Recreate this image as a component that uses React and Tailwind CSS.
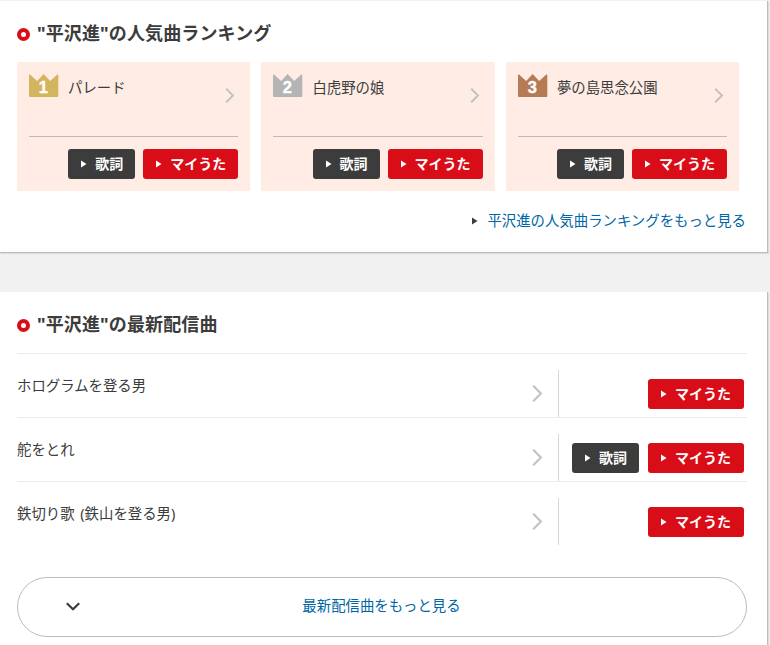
const ranking = [
  { rank: 1, title: 'パレード', color: '#d4b55f' },
  { rank: 2, title: '白虎野の娘', color: '#b4b4b4' },
  { rank: 3, title: '夢の島思念公園', color: '#b67b54' },
];

const latest = [
  { title: 'ホログラムを登る男', lyrics: false },
  { title: '舵をとれ', lyrics: true },
  { title: '鉄切り歌 (鉄山を登る男)', lyrics: false },
];

function Heading({ children }) {
  return (
    <h2 className="flex h-[26px] items-center text-[18px] leading-[26px] font-bold tracking-[0.12px]">
      <span className="mt-[3px] mr-[7px] h-[13px] w-[13px] shrink-0 rounded-full border-4 border-[#d90d17] bg-white" />
      {children}
    </h2>
  );
}

function Crown({ rank, color }) {
  return (
    <svg width="30" height="24" viewBox="0 0 30 24" className="mt-px shrink-0">
      <path
        d="M0.7 0.3 L8.2 7 L14.6 0 L21.2 7 L28.6 0.3 L29.3 1 V22 Q29.3 23 28.3 23 H1 Q0 23 0 22 V1 Z"
        fill={color}
      />
      <text
        x="14.3"
        y="19"
        textAnchor="middle"
        fill="#fff"
        stroke="#fff"
        strokeWidth="0.4"
        fontSize="16.5"
        fontWeight="700"
        fontFamily="Liberation Sans, sans-serif"
      >
        {rank}
      </text>
    </svg>
  );
}

function Triangle({ className }) {
  return (
    <svg width="6" height="8" viewBox="0 0 6 8" className={className}>
      <path d="M0 0.5 L5.5 4 L0 7.5 Z" fill="currentColor" />
    </svg>
  );
}

function Chevron({ width, height, className }) {
  return (
    <svg width={width} height={height} viewBox="0 0 10 16" className={className}>
      <path d="M1 0.8 L8.2 8 L1 15.2" fill="none" stroke="#c1c1c1" strokeWidth="2" />
    </svg>
  );
}

function LyricsButton() {
  return (
    <button className="flex h-[30px] w-[67px] items-center rounded-[3px] bg-[#3c3c3c] pl-[13px] text-[14px] leading-[30px] font-bold whitespace-nowrap text-white">
      <Triangle className="mr-2 shrink-0" />
      歌詞
    </button>
  );
}

function MyUtaButton({ className }) {
  return (
    <button
      className={`flex h-[30px] items-center rounded-[3px] bg-[#d90d17] pl-[13px] text-[14px] leading-[30px] font-bold whitespace-nowrap text-white ${className}`}
    >
      <Triangle className="mr-2 shrink-0" />
      マイうた
    </button>
  );
}

function RankingCard({ rank, title, color }) {
  return (
    <div className="flex h-[129px] flex-1 flex-col bg-[#ffece5] px-3 pb-3">
      <div className="flex h-[75px] items-start border-b border-[#bbb] pt-[11px]">
        <Crown rank={rank} color={color} />
        <p className="ml-[9px] flex-1 pt-[4px] text-[14.4px] leading-[22px]">{title}</p>
        <Chevron width="10" height="15" className="mt-[15px] mr-[3px]" />
      </div>
      <div className="mt-3 flex justify-end gap-2">
        <LyricsButton />
        <MyUtaButton className="w-[95px]" />
      </div>
    </div>
  );
}

function SongRow({ title, lyrics }) {
  return (
    <li className="flex h-16 border-t border-[#ebebeb] pt-4">
      <p className="flex-1 pt-[5px] text-[14.4px] leading-[22px] [word-spacing:2px]">{title}</p>
      <Chevron width="11" height="17" className="mt-[15px] mr-[15px]" />
      <div className="flex h-[47px] w-[189px] items-start justify-end gap-[9px] border-l border-[#d5d5d5] pt-[9px] pr-[3px]">
        {lyrics && <LyricsButton />}
        <MyUtaButton className="w-[96px]" />
      </div>
    </li>
  );
}

export default function App() {
  return (
    <div className="h-[645px] overflow-hidden bg-[#f1f1f1] pt-px font-['Noto_Sans','Noto_Sans_CJK_JP',sans-serif] text-[#3c3c3c]">
      <section className="h-[252px] w-[768px] border-r border-b border-[#bbb] bg-white pt-[19px] pl-[17px] shadow-[1px_1px_1px_#ddd]">
        <Heading>"平沢進"の人気曲ランキング</Heading>
        <div className="mt-4 flex w-[722px] gap-[11.3px]">
          {ranking.map((song) => (
            <RankingCard key={song.rank} {...song} />
          ))}
        </div>
        <a className="mt-[19px] mr-[21px] flex items-center justify-end text-[14.4px] leading-[22px] text-[#0066a5]">
          <Triangle className="mr-[9px] text-[#3c3c3c]" />
          平沢進の人気曲ランキングをもっと見る
        </a>
      </section>

      <section className="mt-[39px] h-[400px] w-[768px] border-r border-[#bbb] bg-white pt-[19px] pr-[20px] pl-[17px] shadow-[1px_1px_1px_#ddd]">
        <Heading>"平沢進"の最新配信曲</Heading>
        <ul className="mt-[16px]">
          {latest.map((song) => (
            <SongRow key={song.title} {...song} />
          ))}
        </ul>
        <a className="mt-8 flex h-[60px] items-center rounded-full border border-[#bbb] pr-[63px] pb-[2px] pl-[48px] text-[14.4px] text-[#0066a5]">
          <svg width="14" height="9" viewBox="0 0 14 9" className="shrink-0">
            <path d="M0.8 1.2 L7 7.3 L13.2 1.2" fill="none" stroke="#3c3c3c" strokeWidth="2.2" />
          </svg>
          <span className="flex-1 text-center">最新配信曲をもっと見る</span>
        </a>
      </section>
    </div>
  );
}
